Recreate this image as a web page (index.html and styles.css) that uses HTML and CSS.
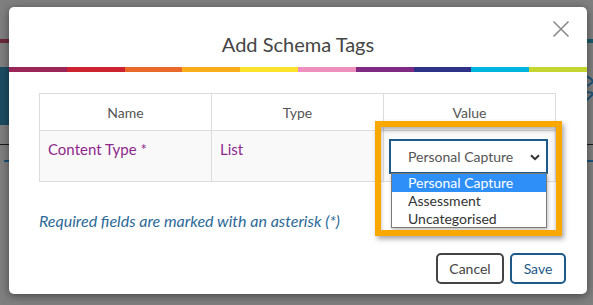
FILE: index.html
```html
<!DOCTYPE html>
<html>
<head>
<meta charset="utf-8">
<link rel="stylesheet" href="styles.css">
</head>
<body>
<div class="backdrop">
  <div class="bg-line bg-maroon"></div>
  <div class="bg-teal"></div>
  <div class="bg-line bg-dark"></div>
  <div class="bg-dash bg-dash-l"></div>
  <div class="bg-dash bg-dash-r"></div>
  <div class="bg-tealdash"></div>
  <svg class="bg-curves" width="10" height="30" viewBox="0 0 10 30"><path d="M1 4 Q8 6 9 10 L3 14 M1 20 Q8 20 9 22 L3 28" fill="none" stroke="#1d5378" stroke-width="2"/></svg>
</div>
<div class="modal">
  <div class="modal-header">
    <h1 class="title">Add Schema Tags</h1>
    <svg class="close" width="18" height="18" viewBox="0 0 18 18"><path d="M1.5 1.5 L16.5 16.5 M16.5 1.5 L1.5 16.5" stroke="#8a8a8a" stroke-width="1.6" fill="none"/></svg>
  </div>
  <div class="rainbow"></div>
  <div class="modal-body">
    <table class="tags">
      <thead>
        <tr><th>Name</th><th>Type</th><th>Value</th></tr>
      </thead>
      <tbody>
        <tr>
          <td class="name">Content Type *</td>
          <td class="name">List</td>
          <td class="value">
            <div class="select">
              <span>Personal Capture</span>
              <svg class="chev" width="10" height="7" viewBox="0 0 10 7"><path d="M1 1.2 L5 5.2 L9 1.2" fill="none" stroke="#333" stroke-width="2"/></svg>
            </div>
            <ul class="options">
              <li class="sel">Personal Capture</li>
              <li>Assessment</li>
              <li>Uncategorised</li>
            </ul>
            <div class="highlight"></div>
          </td>
        </tr>
      </tbody>
    </table>
    <p class="note">Required fields are marked with an asterisk (*)</p>
  </div>
  <div class="modal-footer">
    <button class="btn btn-cancel">Cancel</button>
    <button class="btn btn-save">Save</button>
  </div>
</div>
</body>
</html>
```
FILE: styles.css
```css
* { box-sizing: border-box; }
html, body { margin: 0; padding: 0; }
body {
  width: 593px;
  height: 305px;
  overflow: hidden;
  background: #7f7f7f;
  font-family: "Lato", "Open Sans", sans-serif;
  position: relative;
}
.backdrop { position: absolute; inset: 0; }
.bg-line { position: absolute; left: 0; right: 0; }
.bg-maroon { top: 39px; height: 4px; background: #6b2a3a; }
.bg-teal { position: absolute; left: 0; width: 12px; top: 67px; height: 58px; background: #1c4c62; }
.bg-dark { top: 144px; height: 1px; background: #1a1a1a; }
.bg-dash { position: absolute; top: 160px; height: 2px; width: 10px; background: #1d5378; }
.bg-dash-l { left: 4px; }
.bg-dash-r { left: 583px; }
.bg-tealdash { position: absolute; left: 584px; top: 39px; width: 9px; height: 4px; background: #1c5a6a; }
.bg-curves { position: absolute; left: 584px; top: 72px; }

.modal {
  position: relative;
  margin: 7px 0 0 9px;
  width: 578px;
  height: 287px;
  background: #fff;
  border-radius: 5px;
  box-shadow: 0 2px 10px rgba(0,0,0,0.45);
  display: flex;
  flex-direction: column;
}
.modal-header {
  height: 60px;
  display: flex;
  align-items: center;
  justify-content: center;
  position: relative;
}
.title {
  margin: 14px 0 0 0;
  font-size: 20px;
  font-weight: 400;
  color: #454545;
}
.close { position: absolute; left: 543px; top: 13px; }
.rainbow {
  height: 5px;
  background: linear-gradient(to right,
    #9b2758 0 10%, #cc2232 10% 20%, #e9692a 20% 30%, #f9ae1b 30% 40%,
    #fde22b 40% 50%, #ee8fbe 50% 60%, #7e2a83 60% 70%, #2f3387 70% 80%,
    #00b4e0 80% 90%, #c6d631 90% 100%);
}
.modal-body { padding: 21px 31px 0 30px; flex: 1; }
.tags {
  width: 517px;
  border-collapse: collapse;
  table-layout: fixed;
  font-size: 14px;
}
.tags th, .tags td { border: 1px solid #dcdcdc; }
.tags th {
  height: 37px;
  font-weight: 400;
  color: #555;
  text-align: center;
  padding: 0;
}
.tags td {
  height: 51px;
  background: #f9f9f9;
  vertical-align: top;
  padding: 9px 8px 0 8px;
}
.tags td.name { color: #8e288d; font-size: 15px; }
.tags td.value { position: relative; padding: 8px 7px 0 5px; }
.select {
  height: 35px;
  border: 2px solid #1d5a8a;
  background: #fff;
  display: flex;
  align-items: center;
  padding: 0 6px 0 17px;
  color: #555;
}
.select span { flex: 1; }
.chev { margin-top: 1px; }
.options {
  position: absolute;
  left: 7px;
  top: 42px;
  width: 156px;
  margin: 0;
  padding: 0;
  list-style: none;
  background: #fff;
  border: 1px solid #7a7a7a;
  box-shadow: 1px 2px 4px rgba(0,0,0,0.25);
  color: #333;
  font-size: 14px;
  z-index: 2;
}
.options li { height: 17.7px; line-height: 17px; padding-left: 16px; }
.options li.sel { background: #2f8ff9; color: #fff; height: 18px; }
.highlight {
  position: absolute;
  left: -9px;
  top: -10px;
  width: 187px;
  height: 115px;
  border: 6px solid #f8a800;
  box-shadow: 2px 3px 5px rgba(0,0,0,0.35), inset 0 3px 4px rgba(0,0,0,0.3);
  z-index: 3;
  pointer-events: none;
}
.note {
  margin: 29px 0 0 0;
  font-size: 16px;
  font-style: italic;
  color: #2c6a98;
}
.modal-footer {
  display: flex;
  justify-content: flex-end;
  gap: 6px;
  padding: 0 21px 10px 0;
}
.btn {
  height: 31px;
  border-radius: 5px;
  background: #fff;
  font-family: inherit;
  font-size: 14px;
  border: 2px solid #444;
  color: #444;
  padding: 0;
}
.btn-cancel { width: 68px; }
.btn-save { width: 56px; border-color: #1d5a8a; color: #1d5a8a; }
```
